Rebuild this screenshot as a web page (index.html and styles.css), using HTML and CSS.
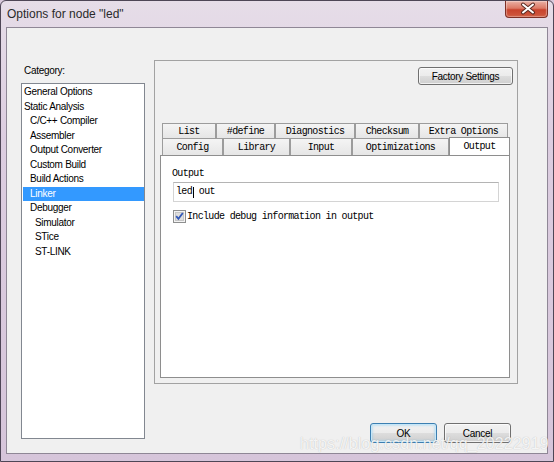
FILE: index.html
```html
<!DOCTYPE html>
<html>
<head>
<meta charset="utf-8">
<link rel="stylesheet" href="styles.css">
</head>
<body>
<div class="window">
  <div class="titlebar">
    <span class="title">Options for node "led"</span>
    <div class="close">
      <svg width="43" height="17" viewBox="0 0 43 17">
        <path d="M18 4.5 L28 12.5 M28 4.5 L18 12.5" stroke="#5a2a22" stroke-width="4" stroke-linecap="round" fill="none"/>
        <path d="M18 4.5 L28 12.5 M28 4.5 L18 12.5" stroke="#ffffff" stroke-width="2" stroke-linecap="round" fill="none"/>
      </svg>
    </div>
  </div>
  <div class="client">
    <div class="left">
      <div class="cat-label">Category:</div>
      <ul class="catlist">
        <li class="l0">General Options</li>
        <li class="l0">Static Analysis</li>
        <li class="l1">C/C++ Compiler</li>
        <li class="l1">Assembler</li>
        <li class="l1">Output Converter</li>
        <li class="l1">Custom Build</li>
        <li class="l1">Build Actions</li>
        <li class="l1 sel">Linker</li>
        <li class="l1">Debugger</li>
        <li class="l2">Simulator</li>
        <li class="l2">STice</li>
        <li class="l2">ST-LINK</li>
      </ul>
    </div>
    <div class="right">
      <div class="group">
        <div class="factory-row"><div class="btn factory">Factory Settings</div></div>
        <div class="tabs">
          <div class="tabrow back">
            <div class="tab w-list">List</div>
            <div class="tab w-define">#define</div>
            <div class="tab w-diag">Diagnostics</div>
            <div class="tab w-check">Checksum</div>
            <div class="tab w-extra">Extra Options</div>
          </div>
          <div class="tabrow front">
            <div class="tab w-config">Config</div>
            <div class="tab w-library">Library</div>
            <div class="tab w-input">Input</div>
            <div class="tab w-opt">Optimizations</div>
            <div class="tab w-output active">Output</div>
          </div>
        </div>
        <div class="page">
          <div class="field-label">Output</div>
          <div class="textbox">led<span class="caret"></span> out</div>
          <div class="check-row">
            <svg class="checkbox" width="13" height="13" viewBox="0 0 13 13">
              <rect x="0.5" y="0.5" width="12" height="12" fill="#f3f3f3" stroke="#8e8f8f"/>
              <rect x="2.5" y="2.5" width="8" height="8" fill="#dedede" stroke="#c6c6c6"/>
              <path d="M3.2 6.2 L5.4 8.8 L9.8 3" stroke="#3158b8" stroke-width="1.8" fill="none"/>
            </svg>
            <span class="check-text">Include debug information in output</span>
          </div>
        </div>
      </div>
      <div class="buttons">
        <div class="btn dlg default">OK</div>
        <div class="btn dlg">Cancel</div>
      </div>
    </div>
  </div>
  <div class="watermark">https://blog.csdn.net/qq_20222919</div>
</div>
</body>
</html>
```

FILE: styles.css
```css
* { box-sizing: border-box; }

html, body {
  margin: 0;
  padding: 0;
  width: 554px;
  height: 462px;
  overflow: hidden;
  background: #d8c9dc;
}

.window {
  position: relative;
  width: 554px;
  height: 462px;
  border: 1px solid #4e4656;
  border-radius: 6px 6px 0 0;
  background: linear-gradient(to bottom, #e6dde8 0%, #dccde0 30%, #d6c5da 100%);
  display: flex;
  flex-direction: column;
  font-family: "Liberation Sans", Arial, sans-serif;
}

.titlebar {
  height: 26px;
  display: flex;
  justify-content: space-between;
  align-items: flex-start;
}

.title {
  padding: 6px 0 0 6px;
  font-size: 12px;
  line-height: 14px;
  color: #2a2a2a;
}

.close {
  width: 43px;
  height: 17px;
  margin-right: 5px;
  border: 1px solid #7e3026;
  border-top: none;
  border-radius: 0 0 4px 4px;
  background: linear-gradient(to bottom, #eab0a4 0%, #dc7a66 45%, #c8432d 55%, #cf5a40 100%);
  box-shadow: inset 0 0 1px 1px rgba(255,255,255,0.35);
}
.close svg { display: block; margin: -1px 0 0 -1px; }

.client {
  margin: 0 5px;
  height: 427px;
  border: 1px solid #8f8796;
  background: #f0f0f0;
  display: flex;
}

.left {
  width: 138px;
  padding-left: 14px;
}

.cat-label {
  margin-top: 36px;
  font-size: 10px;
  letter-spacing: -0.3px;
  line-height: 13px;
  padding-left: 3px;
  color: #000;
}

.catlist {
  list-style: none;
  margin: 6px 0 0 0;
  padding: 1px 0 0 0;
  width: 124px;
  height: 356px;
  border: 1px solid #828790;
  background: #fff;
}

.catlist li {
  font-size: 10px;
  letter-spacing: -0.3px;
  line-height: 14.5px;
  height: 14.5px;
  margin-left: 1px;
  color: #000;
  white-space: nowrap;
}
.catlist li.l0 { padding-left: 1px; }
.catlist li.l1 { padding-left: 7px; }
.catlist li.l2 { padding-left: 12px; }
.catlist li.sel {
  background: #3399ff;
  color: #fff;
  height: 14px;
  line-height: 14px;
  margin-top: 0.5px;
  margin-bottom: 0;
}

.right {
  margin-left: 9px;
  width: 364px;
}

.group {
  margin-top: 32px;
  width: 364px;
  height: 324px;
  border: 1px solid #a2a2a2;
  padding: 6px 4px 5px 6px;
}

.factory-row {
  display: flex;
  justify-content: flex-end;
}

.btn {
  display: flex;
  align-items: center;
  justify-content: center;
  font-size: 10px;
  letter-spacing: -0.3px;
  color: #000;
  border: 1px solid #707070;
  border-radius: 3px;
  background: linear-gradient(to bottom, #f2f2f2 0%, #ebebeb 50%, #dddddd 51%, #cfcfcf 100%);
  box-shadow: inset 0 0 0 1px rgba(255,255,255,0.7);
}

.factory {
  width: 95px;
  height: 18px;
}

.tabs {
  margin-top: 38px;
  margin-left: 1px;
  font-family: "Liberation Mono", "Courier New", monospace;
  font-size: 10px;
  letter-spacing: -0.67px;
}

.tabrow {
  display: flex;
}
.tabrow.back { height: 15px; }
.tabrow.front { height: 17px; }

.tab {
  height: 100%;
  border: 1px solid #9c9c9c;
  border-bottom: none;
  background: linear-gradient(to bottom, #f4f4f4, #e6e6e6);
  display: flex;
  align-items: center;
  justify-content: center;
  color: #000;
  white-space: nowrap;
}

.w-list { width: 54px; }
.w-define { width: 59px; }
.w-diag { width: 80px; }
.w-check { width: 64px; }
.w-extra { width: 89px; }
.w-config { width: 61px; }
.w-library { width: 67px; }
.w-input { width: 62px; }
.w-opt { width: 97px; }
.w-output { width: 61px; }

.tab.active {
  position: relative;
  z-index: 1;
  height: 18px;
  margin-top: -1px;
  background: #fff;
  border-color: #8e8e8e;
  align-items: flex-start;
  padding-top: 3px;
}

.page {
  width: 350px;
  height: 223px;
  margin-left: -1px;
  border: 1px solid #8e8e8e;
  background: #fff;
  padding: 11px 0 0 11px;
  font-family: "Liberation Mono", "Courier New", monospace;
  font-size: 10px;
  letter-spacing: -0.67px;
  color: #000;
}

.field-label {
  line-height: 13px;
  height: 13px;
}

.textbox {
  margin-top: 2px;
  margin-left: 1px;
  width: 326px;
  height: 20px;
  border: 1px solid #d4d4d4;
  border-top-color: #b4b4b4;
  padding-left: 2px;
  line-height: 18px;
  display: flex;
  align-items: center;
  white-space: pre;
}

.caret {
  display: inline-block;
  width: 1px;
  height: 11px;
  background: #000;
  margin-left: 0.5px;
}

.check-row {
  margin-top: 8px;
  margin-left: 1px;
  display: flex;
  align-items: center;
  height: 13px;
}

.checkbox { display: block; flex: none; }

.check-text {
  margin-left: 1px;
  line-height: 13px;
}

.buttons {
  margin-top: 39px;
  display: flex;
  justify-content: flex-end;
  gap: 7px;
  padding-right: 7px;
}

.dlg {
  width: 67px;
  height: 20px;
}

.dlg.default {
  border-color: #3c7fb1;
  box-shadow: inset 0 0 0 1px #c5e6f8, inset 0 0 2px 2px rgba(120,200,240,0.35);
}

.watermark {
  position: absolute;
  left: 299px;
  top: 434px;
  font-family: "Liberation Sans", Arial, sans-serif;
  font-size: 16px;
  letter-spacing: 0.1px;
  color: rgba(255,255,255,0.85);
  text-shadow: 0 0 1px rgba(90,90,90,0.4);
  white-space: nowrap;
}
```
